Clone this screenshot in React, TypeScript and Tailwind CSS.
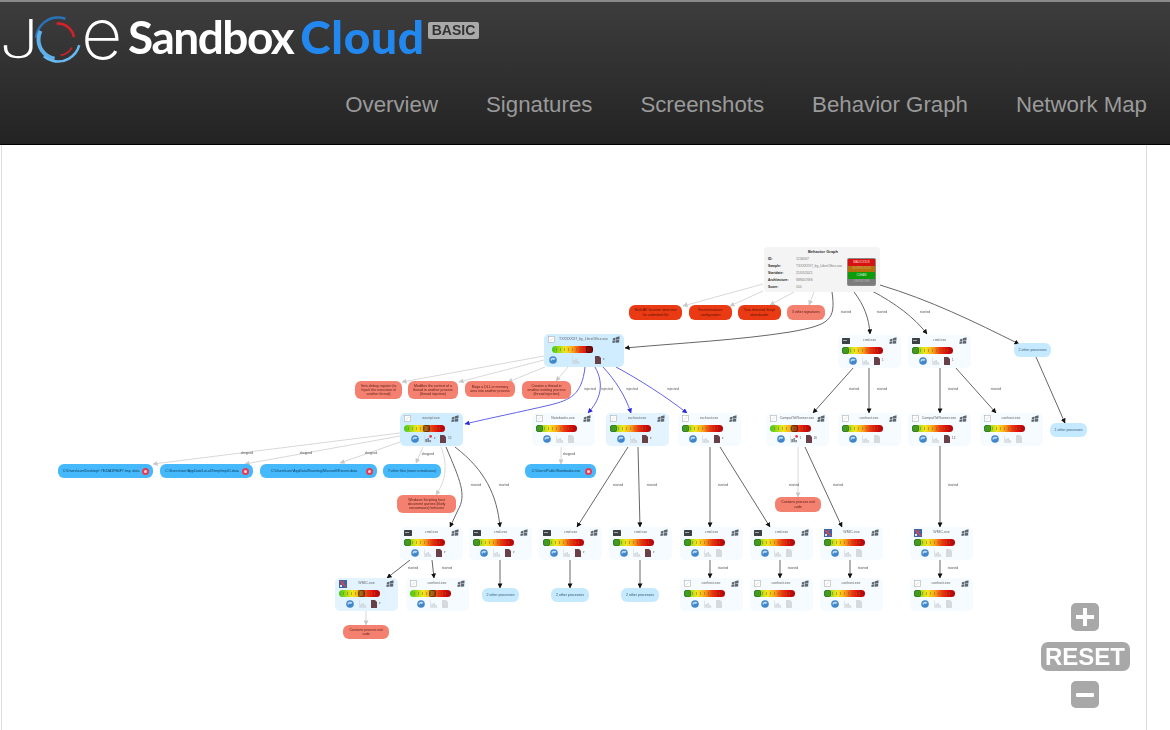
import React from "react";

// graph coordinates below are page coordinates, the panel starts at (2,145)
const OX = 2;
const OY = 145;

type ProcKind = "doc" | "cmd" | "wmic";
type Proc = {
    x: number;
    y: number;
    w?: number;
    h?: number;
    name: string;
    kind: ProcKind;
    bg: string;
    score: number;
    chartAlert?: boolean;
    alertCount?: string;
    files?: string;
};

const PALE = "bg-[#f6fbff]";
const MID = "bg-[#e3f3ff]";
const BLUE = "bg-[#d0ecff]";

const procs: Proc[] = [
    { x: 544, y: 334, w: 80, name: "TXXXXXX7_by_LibreOffice.xxx", kind: "doc", bg: BLUE, score: 0.82, files: "▾" },
    { x: 838, y: 335, name: "cmd.exe", kind: "cmd", bg: PALE, score: 0, files: "1" },
    { x: 908, y: 335, name: "cmd.exe", kind: "cmd", bg: PALE, score: 0, files: "1" },
    { x: 400, y: 413, name: "wscript.exe", kind: "doc", bg: BLUE, score: 0.47, chartAlert: true, alertCount: "▾", files: "52" },
    { x: 532, y: 413, name: "Notebooks.exe", kind: "doc", bg: PALE, score: 0 },
    { x: 606, y: 413, name: "svchost.exe", kind: "doc", bg: MID, score: 0, files: "▾" },
    { x: 678, y: 413, name: "svchost.exe", kind: "doc", bg: PALE, score: 0, files: "▾" },
    { x: 766, y: 413, name: "CompatTelRunner.exe", kind: "doc", bg: PALE, score: 0.5, chartAlert: true, alertCount: "1", files: "16" },
    { x: 838, y: 413, name: "conhost.exe", kind: "doc", bg: PALE, score: 0 },
    { x: 908, y: 413, name: "CompatTelRunner.exe", kind: "doc", bg: PALE, score: 0, files: "12" },
    { x: 980, y: 413, name: "conhost.exe", kind: "doc", bg: PALE, score: 0 },
    { x: 400, y: 527, name: "cmd.exe", kind: "cmd", bg: PALE, score: 0, files: "▾" },
    { x: 469, y: 527, name: "cmd.exe", kind: "cmd", bg: PALE, score: 0, files: "▾" },
    { x: 539, y: 527, name: "cmd.exe", kind: "cmd", bg: PALE, score: 0, files: "▾" },
    { x: 609, y: 527, name: "cmd.exe", kind: "cmd", bg: PALE, score: 0, files: "▾" },
    { x: 680, y: 527, name: "cmd.exe", kind: "cmd", bg: PALE, score: 0 },
    { x: 750, y: 527, name: "cmd.exe", kind: "cmd", bg: PALE, score: 0 },
    { x: 820, y: 527, name: "WMIC.exe", kind: "wmic", bg: PALE, score: 0 },
    { x: 910, y: 527, name: "WMIC.exe", kind: "wmic", bg: PALE, score: 0 },
    { x: 335, y: 578, name: "WMIC.exe", kind: "wmic", bg: MID, score: 0.47, files: "▾" },
    { x: 406, y: 578, name: "conhost.exe", kind: "doc", bg: PALE, score: 0.47 },
    { x: 680, y: 578, name: "conhost.exe", kind: "doc", bg: PALE, score: 0 },
    { x: 750, y: 578, name: "conhost.exe", kind: "doc", bg: PALE, score: 0 },
    { x: 820, y: 578, name: "conhost.exe", kind: "doc", bg: PALE, score: 0 },
    { x: 910, y: 578, name: "conhost.exe", kind: "doc", bg: PALE, score: 0 },
];

type Pill = {
    x: number;
    y: number;
    w: number;
    h: number;
    text: string;
    tone: "red" | "salmon" | "sky" | "file";
    badge?: boolean;
};

const pills: Pill[] = [
    { x: 629, y: 305, w: 53, h: 15, tone: "red", text: "Multi AV Scanner detection for submitted file" },
    { x: 689, y: 305, w: 43, h: 15, tone: "red", text: "Found malware configuration" },
    { x: 738, y: 305, w: 43, h: 15, tone: "red", text: "Yara detected Script downloader" },
    { x: 787, y: 305, w: 38, h: 15, tone: "salmon", text: "3 other signatures" },
    { x: 1014, y: 343, w: 37, h: 14, tone: "sky", text: "2 other processes" },
    { x: 355, y: 381, w: 47, h: 18, tone: "salmon", text: "Sets debug register (to hijack the execution of another thread)" },
    { x: 408, y: 381, w: 50, h: 18, tone: "salmon", text: "Modifies the context of a thread in another process (thread injection)" },
    { x: 465, y: 381, w: 50, h: 16, tone: "salmon", text: "Maps a DLL or memory area into another process" },
    { x: 522, y: 381, w: 49, h: 18, tone: "salmon", text: "Creates a thread in another existing process (thread injection)" },
    { x: 1050, y: 423, w: 37, h: 14, tone: "sky", text: "1 other processes" },
    { x: 58, y: 464, w: 95, h: 14, tone: "file", badge: true, text: "C:\\Users\\user\\Desktop\\~7E43A1FB4F7.tmp .data" },
    { x: 160, y: 464, w: 93, h: 14, tone: "file", badge: true, text: "C:\\Users\\user\\AppData\\Local\\Temp\\tmp01.data" },
    { x: 260, y: 464, w: 117, h: 14, tone: "file", badge: true, text: "C:\\Users\\user\\AppData\\Roaming\\Microsoft\\Recent.data" },
    { x: 383, y: 464, w: 58, h: 14, tone: "file", text: "7 other files (none is malicious)" },
    { x: 525, y: 464, w: 71, h: 14, tone: "file", badge: true, text: "C:\\Users\\Public\\Notebooks.exe" },
    { x: 397, y: 495, w: 59, h: 18, tone: "salmon", text: "Windows Scripting host document queries (likely ransomware) behavior" },
    { x: 775, y: 497, w: 46, h: 15, tone: "salmon", text: "Contains process exit code" },
    { x: 482, y: 588, w: 37, h: 14, tone: "sky", text: "2 other processes" },
    { x: 551, y: 588, w: 38, h: 14, tone: "sky", text: "2 other processes" },
    { x: 621, y: 588, w: 38, h: 14, tone: "sky", text: "2 other processes" },
    { x: 343, y: 625, w: 46, h: 14, tone: "salmon", text: "Contains process exit code" },
];

const pillTone: Record<Pill["tone"], string> = {
    red: "bg-[#ea3a14] text-[#5a1405]",
    salmon: "bg-[#f4806f] text-[#5c2018]",
    sky: "bg-[#c5e9ff] text-[#33566e]",
    file: "bg-[#45b9fc] text-[#0f3a58]",
};

type Edge = { d: string; tone: "dark" | "light" | "blue" };

const edges: Edge[] = [
    { tone: "light", d: "M763 284 L683 306" },
    { tone: "light", d: "M763 291 L730 306" },
    { tone: "light", d: "M794 292 L770 305" },
    { tone: "light", d: "M814 292 L809 305" },
    { tone: "dark", d: "M832 292 C836 320 830 325 790 332 C740 340 680 343 625 348" },
    { tone: "dark", d: "M854 292 C864 305 869 318 870 334" },
    { tone: "dark", d: "M872 291 C895 303 915 318 927 334" },
    { tone: "dark", d: "M880 285 C930 300 975 322 1019 344" },
    { tone: "light", d: "M544 356 L402 382" },
    { tone: "light", d: "M544 360 L459 382" },
    { tone: "light", d: "M545 367 L508 382" },
    { tone: "light", d: "M568 367 L556 381" },
    { tone: "blue", d: "M585 367 C582 395 570 400 550 405 C520 412 490 418 465 424" },
    { tone: "blue", d: "M595 367 C605 385 600 400 588 413" },
    { tone: "blue", d: "M603 367 C615 380 625 395 631 413" },
    { tone: "blue", d: "M616 367 C640 380 665 396 687 413" },
    { tone: "light", d: "M400 433 L153 464" },
    { tone: "light", d: "M400 436 L245 464" },
    { tone: "light", d: "M400 442 L340 463" },
    { tone: "light", d: "M423 447 L416 463" },
    { tone: "light", d: "M441 447 C448 465 446 480 436 495" },
    { tone: "dark", d: "M446 447 C460 480 467 495 458 510 L450 527" },
    { tone: "dark", d: "M455 447 C485 470 497 495 500 527" },
    { tone: "light", d: "M561 447 L561 464" },
    { tone: "dark", d: "M628 447 L577 527" },
    { tone: "dark", d: "M638 447 L640 527" },
    { tone: "dark", d: "M710 447 L710 527" },
    { tone: "dark", d: "M720 447 L770 527" },
    { tone: "light", d: "M798 447 L798 497" },
    { tone: "dark", d: "M805 447 L842 527" },
    { tone: "dark", d: "M854 367 L813 413" },
    { tone: "dark", d: "M869 367 L869 413" },
    { tone: "dark", d: "M940 367 L940 413" },
    { tone: "dark", d: "M955 367 L996 413" },
    { tone: "dark", d: "M1036 357 L1065 423" },
    { tone: "dark", d: "M940 446 L940 527" },
    { tone: "dark", d: "M410 560 L387 578" },
    { tone: "dark", d: "M432 560 L434 578" },
    { tone: "dark", d: "M500 560 L500 588" },
    { tone: "dark", d: "M570 560 L570 588" },
    { tone: "dark", d: "M640 560 L640 588" },
    { tone: "dark", d: "M710 560 L710 578" },
    { tone: "dark", d: "M780 560 L780 578" },
    { tone: "dark", d: "M850 560 L850 578" },
    { tone: "dark", d: "M940 560 L940 578" },
    { tone: "light", d: "M366 611 L366 625" },
];

const edgeLabels: [number, number, string][] = [
    [846, 313, "started"],
    [882, 313, "started"],
    [925, 313, "started"],
    [590, 390, "injected"],
    [607, 390, "injected"],
    [632, 390, "injected"],
    [673, 390, "injected"],
    [854, 390, "started"],
    [882, 390, "started"],
    [953, 390, "started"],
    [996, 390, "started"],
    [247, 454, "dropped"],
    [306, 454, "dropped"],
    [371, 454, "dropped"],
    [428, 455, "dropped"],
    [569, 455, "dropped"],
    [476, 486, "started"],
    [504, 486, "started"],
    [618, 486, "started"],
    [652, 486, "started"],
    [723, 486, "started"],
    [794, 486, "started"],
    [838, 486, "started"],
    [953, 486, "started"],
    [413, 569, "started"],
    [447, 569, "started"],
    [723, 569, "started"],
    [793, 569, "started"],
    [863, 569, "started"],
    [953, 569, "started"],
];

const edgeColor = { dark: "#666666", light: "#d8d8d8", blue: "#6262e6" };
const markerFor = { dark: "url(#arrowDark)", light: "url(#arrowLight)", blue: "url(#arrowBlue)" };

const WinLogo = () => (
    <svg viewBox="0 0 10 10" className="w-[8px] h-[8px] shrink-0">
        <g fill="#5c6670">
            <path d="M1 3 L4.4 1.8 L4.4 4.6 L1 5.2 Z" />
            <path d="M5 1.6 L9.4 0.4 L9.4 4 L5 4.6 Z" />
            <path d="M0.6 5.8 L4 5.2 L4 8 L0.6 8.8 Z" />
            <path d="M4.6 5.2 L9 4.6 L9 8 L4.6 8.4 Z" />
        </g>
    </svg>
);

const ProcIcon = ({ kind }: { kind: ProcKind }) => {
    if (kind === "cmd") {
        return (
            <svg viewBox="0 0 8 6" className="w-[8px] h-[6px] shrink-0">
                <rect width="8" height="6" rx="0.6" fill="#3c4146" />
                <rect x="1" y="2" width="4" height="1" fill="#aaa" />
            </svg>
        );
    }
    if (kind === "wmic") {
        return (
            <svg viewBox="0 0 8 8" className="w-[8px] h-[8px] shrink-0">
                <rect width="8" height="8" fill="#3c64a8" />
                <path d="M1 1 L7 7 M5 1 L2 6" stroke="#e04848" strokeWidth="1.2" />
                <rect x="1" y="5" width="2" height="2" fill="#dfe8f5" />
            </svg>
        );
    }
    return (
        <svg viewBox="0 0 8 8" className="w-[7px] h-[7px] shrink-0">
            <rect x="0.4" y="0.4" width="7.2" height="7.2" fill="#fff" stroke="#b0b0b0" strokeWidth="0.7" />
            <path d="M2 5.5 L5.5 2.5" stroke="#c8c8c8" strokeWidth="0.7" />
        </svg>
    );
};

const Globe = () => (
    <svg viewBox="0 0 8 8" className="w-[8px] h-[8px] shrink-0">
        <circle cx="4" cy="4" r="3.8" fill="#3f86cc" />
        <path d="M1.5 3 C3 1.5 5 1.5 6.5 2.5 L5 4 L3 3.6 L2 5.6 Z" fill="#bfdcf4" />
    </svg>
);

const ChartIcon = ({ alert }: { alert?: boolean }) => (
    <svg viewBox="0 0 8 8" className="w-[8px] h-[8px] shrink-0">
        <path d="M0.5 0.5 V7.5 H7.5" stroke="#cfd4d8" strokeWidth="0.6" fill="none" />
        <g fill={alert ? "#566270" : "#c6ccd2"}>
            <rect x="1.5" y="4" width="1.2" height="3" />
            <rect x="3.5" y="3" width="1.2" height="4" />
            <rect x="5.5" y="5" width="1.2" height="2" />
        </g>
        {alert && <circle cx="6.6" cy="1.4" r="1.4" fill="#e8383c" />}
    </svg>
);

const FileIcon = ({ filled }: { filled: boolean }) => (
    <svg viewBox="0 0 6 8" className="w-[6px] h-[8px] shrink-0">
        <path d="M0 0 H4 L6 2 V8 H0 Z" fill={filled ? "#6a4048" : "#d6dade"} />
    </svg>
);

const ScoreBar = ({ score, wide }: { score: number; wide: boolean }) => (
    <div
        className={`relative h-[7px] w-[41px] shrink-0 rounded-full bg-[linear-gradient(90deg,#3cc814,#a8dc1c_18%,#f4e81c_32%,#f8a81c_50%,#ee3a10_68%,#d80c0c_85%,#a80808)] flex items-center justify-around px-[3px] ${wide ? "ml-[4px]" : ""}`}
    >
        {Array.from({ length: 9 }).map((_, i) => (
            <span key={i} className="block w-px h-[3px] bg-[#806a10]/50" />
        ))}
        <span
            className={`absolute top-0 h-[7px] w-[7px] rounded-[2px] border-[0.5px] ${score === 0 ? "bg-[#2e8a24]/70 border-[#3c7a30]" : "bg-black/30 border-black/40"}`}
            style={{ left: `${score * 41}px` }}
        />
    </div>
);

const ProcNode = ({ p }: { p: Proc }) => (
    <div
        className={`absolute rounded-[5px] ${p.bg} flex flex-col pt-[1.5px] px-[4px] gap-[2.5px]`}
        style={{ left: p.x - OX, top: p.y - OY, width: p.w ?? 63, height: p.h ?? 33 }}
    >
        <div className="flex items-center justify-between h-[8px] gap-[1px]">
            <ProcIcon kind={p.kind} />
            <span className="flex-1 text-center text-[3.5px] leading-none text-[#666] whitespace-nowrap">{p.name}</span>
            <WinLogo />
        </div>
        <ScoreBar score={p.score} wide={!!p.w} />
        <div className={`flex items-center h-[8px] ${p.w ? "pl-[1px] gap-[15px]" : "pl-[7px] gap-[4.5px]"}`}>
            <Globe />
            <span className="flex items-center gap-[2px]">
                <ChartIcon alert={p.chartAlert} />
                {p.alertCount && <span className="text-[3px] leading-none text-[#555]">{p.alertCount}</span>}
            </span>
            <span className="flex items-center gap-[2px]">
                <FileIcon filled={!!p.files} />
                {p.files && <span className="text-[3px] leading-none text-[#555]">{p.files}</span>}
            </span>
        </div>
    </div>
);

const PillNode = ({ p }: { p: Pill }) => (
    <div
        className={`absolute rounded-[6px] flex items-center justify-center gap-[2px] px-[4px] text-center text-[3.5px] leading-[1.15] ${pillTone[p.tone]}`}
        style={{ left: p.x - OX, top: p.y - OY, width: p.w, height: p.h }}
    >
        <span className={p.badge ? "flex-1 whitespace-nowrap overflow-hidden" : ""}>{p.text}</span>
        {p.badge && (
            <span className="w-[7px] h-[7px] rounded-full bg-[#e83a52] flex items-center justify-center shrink-0">
                <span className="block w-[3px] h-[3px] bg-white/80 rounded-full" />
            </span>
        )}
    </div>
);

const summaryRows = [
    ["ID:", "1234567"],
    ["Sample:", "TXXXXXX7_by_LibreOffice.xxx"],
    ["Startdate:", "21/05/2021"],
    ["Architecture:", "WINDOWS"],
    ["Score:", "100"],
];

const SummaryCard = () => (
    <div
        className="absolute rounded-[4px] bg-[#f4f4f4] flex flex-col"
        style={{ left: 764 - OX, top: 247 - OY, width: 116, height: 45 }}
    >
        <div className="text-[4px] leading-none font-bold text-[#333] text-center pl-[2px] pt-[3px]">Behavior Graph</div>
        <div className="flex pl-[4px] pr-[4px] pt-[2px]">
            <div className="flex-1 flex flex-col gap-[3px] pt-[1px]">
                {summaryRows.map(([k, v]) => (
                    <div key={k} className="flex text-[3.3px] leading-[4px]">
                        <span className="w-[28px] font-bold text-[#222]">{k}</span>
                        <span className="text-[#777] whitespace-nowrap">{v}</span>
                    </div>
                ))}
            </div>
            <div className="w-[29px] h-[28px] mt-[2px] rounded-[2px] bg-[#8a8a8a] p-px flex flex-col text-[3px] leading-none text-center text-white/80">
                <span className="flex-1 flex items-center justify-center bg-[#d81010]">MALICIOUS</span>
                <span className="flex-1 flex items-center justify-center bg-[#b8700c] text-white/40">SUSPICIOUS</span>
                <span className="flex-1 flex items-center justify-center bg-[#0c9c0c]">CLEAN</span>
                <span className="flex-1 flex items-center justify-center bg-[#7c7c7c] text-white/40">UNKNOWN</span>
            </div>
        </div>
    </div>
);

const Arrow = ({ id, color }: { id: string; color: string }) => (
    <marker id={id} viewBox="0 0 6 6" refX="5.5" refY="3" markerWidth="5" markerHeight="5" markerUnits="userSpaceOnUse" orient="auto">
        <path d="M0 0 L6 3 L0 6 Z" fill={color} />
    </marker>
);

const GraphEdges = () => (
    <svg className="absolute inset-0 w-full h-full" viewBox={`${OX} ${OY} 1144 585`}>
        <defs>
            <Arrow id="arrowDark" color="#111" />
            <Arrow id="arrowLight" color="#c8c8c8" />
            <Arrow id="arrowBlue" color="#2a2ae0" />
        </defs>
        {edges.map((e) => (
            <path key={e.d} d={e.d} fill="none" stroke={edgeColor[e.tone]} strokeWidth={1} markerEnd={markerFor[e.tone]} />
        ))}
    </svg>
);

const JoeLogo = () => (
    <svg viewBox="0 0 126 70" className="w-[126px] h-[70px] shrink-0 overflow-visible">
        <text transform="translate(-3 48) scale(1.35 1)" fill="#fff" fontSize="53" fontWeight="200" fontFamily="Inter, sans-serif">J</text>
        <g fill="none" strokeLinecap="butt">
            <circle cx="56" cy="29.5" r="22" stroke="#2a72b8" strokeWidth="2.5" strokeDasharray="40 99" transform="rotate(-175 56 29.5)" />
            <circle cx="56" cy="29.5" r="19.5" stroke="#5fb0ea" strokeWidth="4" strokeDasharray="36 87" transform="rotate(100 56 29.5)" />
            <circle cx="56" cy="29.5" r="22" stroke="#6ab8f0" strokeWidth="2.5" strokeDasharray="44 95" transform="rotate(15 56 29.5)" />
            <circle cx="56" cy="29.5" r="16" stroke="#d8202a" strokeWidth="2.5" strokeDasharray="24 76" transform="rotate(-95 56 29.5)" />
            <circle cx="56" cy="29.5" r="16" stroke="#d8202a" strokeWidth="1.5" strokeDasharray="14 86" transform="rotate(30 56 29.5)" />
        </g>
        <text x="79" y="48.5" fill="#fff" fontSize="72" fontWeight="200" fontFamily="Inter, sans-serif">e</text>
    </svg>
);

const navItems = ["Overview", "Signatures", "Screenshots", "Behavior Graph", "Network Map"];

export default function App() {
    return (
        <div className="w-[1170px] h-[730px] overflow-hidden bg-white font-['Liberation_Sans',Arial,sans-serif]">
            <header className="h-[145px] border-t-2 border-t-[#8a8a8a] border-b border-b-black bg-[linear-gradient(180deg,#3d3d3d,#232323)] flex flex-col">
                <div className="flex items-start pt-[8px] pl-[2px] h-[88px] blur-[0.4px]">
                    <JoeLogo />
                    <span className="mt-[1px] font-['Lato',sans-serif] font-bold text-[46px] leading-[52px] tracking-[-1.5px] text-white">
                        Sandbox
                    </span>
                    <span className="mt-[1px] ml-[7px] font-['Lato',sans-serif] font-black text-[46px] leading-[52px] tracking-[0.7px] text-[#2288f0]">
                        Cloud
                    </span>
                    <span className="ml-[3px] mt-[12px] rounded-[2px] bg-[#a9a9a9] px-[4px] h-[17px] text-[14px] leading-[17px] font-bold text-[#333]">
                        BASIC
                    </span>
                </div>
                <nav className="flex justify-end gap-[48px] pr-[23px] text-[22.25px] leading-[30px] text-[#9a9a9a]">
                    {navItems.map((item) => (
                        <a key={item}>{item}</a>
                    ))}
                </nav>
            </header>
            <main className="relative ml-px w-[1146px] h-[585px] border-x border-[#dcdcdc]">
                <div className="absolute inset-0 blur-[0.35px]">
                    <GraphEdges />
                    {edgeLabels.map(([x, y, t], i) => (
                        <span
                            key={i}
                            className="absolute -translate-x-1/2 -translate-y-1/2 text-[3.4px] leading-none text-[#555]"
                            style={{ left: x - OX, top: y - OY }}
                        >
                            {t}
                        </span>
                    ))}
                    <SummaryCard />
                    {procs.map((p, i) => (
                        <ProcNode key={i} p={p} />
                    ))}
                    {pills.map((p, i) => (
                        <PillNode key={i} p={p} />
                    ))}
                </div>
                <div className="absolute right-[16px] bottom-[22px] w-[90px] flex flex-col items-center text-white">
                    <div className="w-[28px] h-[28px] rounded-[5px] bg-[#a8a8a8] flex items-center justify-center">
                        <svg viewBox="0 0 18 18" className="w-[18px] h-[18px]">
                            <path d="M7 0 H11 V7 H18 V11 H11 V18 H7 V11 H0 V7 H7 Z" fill="#fff" />
                        </svg>
                    </div>
                    <div className="mt-[11px] w-[89px] h-[29px] rounded-[7px] bg-[#a8a8a8] flex items-center justify-center text-[24px] leading-none font-bold">
                        RESET
                    </div>
                    <div className="mt-[10px] w-[28px] h-[27px] rounded-[5px] bg-[#a8a8a8] flex items-center justify-center">
                        <span className="block w-[18px] h-[4px] bg-white rounded-[1px]" />
                    </div>
                </div>
            </main>
        </div>
    );
}
